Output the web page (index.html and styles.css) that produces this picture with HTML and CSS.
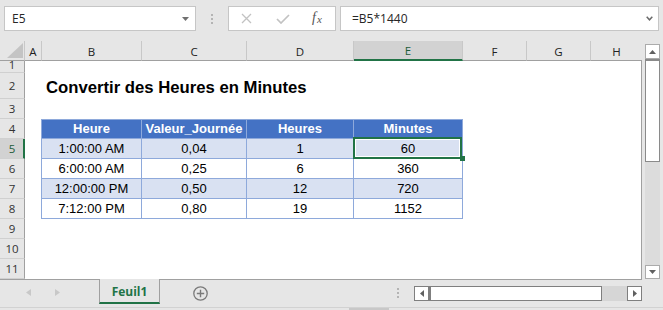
FILE: index.html
```html
<!DOCTYPE html>
<html lang="fr">
<head>
<meta charset="utf-8">
<title>Convertir des Heures en Minutes</title>
<link rel="stylesheet" href="styles.css">
</head>
<body>
<div class="app">
  <div class="topbar">
    <div class="namebox">
      <span>E5</span>
      <svg class="caret" width="7" height="4" viewBox="0 0 7 4"><path d="M0 0h7L3.5 4z" fill="#707070"/></svg>
    </div>
    <div class="grip"><i></i><i></i><i></i></div>
    <div class="fxbox">
      <svg class="ic-x" width="11" height="11" viewBox="0 0 11 11"><path d="M1 1l9 9M10 1l-9 9" stroke="#c2c2c2" stroke-width="1.3" fill="none"/></svg>
      <svg class="ic-check" width="14" height="10" viewBox="0 0 14 10"><path d="M1 5l4 4 8-8" stroke="#c2c2c2" stroke-width="1.7" fill="none"/></svg>
      <span class="fx"><i>f</i><i class="fx-x">x</i></span>
    </div>
    <div class="formula">
      <span>=B5*1440</span>
      <svg width="7" height="5" viewBox="0 0 7 5"><path d="M0.7 0.8L3.5 3.8 6.3 0.8" stroke="#6a6a6a" stroke-width="1.5" fill="none"/></svg>
    </div>
  </div>

  <div class="main">
    <div class="sheet">
      <div class="colhead">
        <div class="corner"><svg width="16" height="15" viewBox="0 0 16 15"><path d="M16 0V15H0z" fill="#c4c4c4"/></svg></div>
        <div class="ch w-a">A</div>
        <div class="ch w-b">B</div>
        <div class="ch w-c">C</div>
        <div class="ch w-d">D</div>
        <div class="ch w-e sel">E</div>
        <div class="ch w-f">F</div>
        <div class="ch w-g">G</div>
        <div class="ch w-h last">H</div>
      </div>

      <div class="row h12 r1"><div class="rh">1</div><div class="body"></div></div>
      <div class="row h26"><div class="rh">2</div><div class="body title-row"><span class="title">Convertir des Heures en Minutes</span></div></div>
      <div class="row h20"><div class="rh">3</div><div class="body"></div></div>

      <div class="row h20 thead">
        <div class="rh">4</div>
        <div class="body">
          <div class="sp"></div>
          <div class="tc b">Heure</div>
          <div class="tc c">Valeur_Journée</div>
          <div class="tc d">Heures</div>
          <div class="tc e">Minutes</div>
        </div>
      </div>
      <div class="row h20 band">
        <div class="rh sel">5</div>
        <div class="body">
          <div class="sp"></div>
          <div class="tc b">1:00:00 AM</div>
          <div class="tc c">0,04</div>
          <div class="tc d">1</div>
          <div class="tc e active">60</div>
        </div>
      </div>
      <div class="row h20">
        <div class="rh">6</div>
        <div class="body">
          <div class="sp"></div>
          <div class="tc b">6:00:00 AM</div>
          <div class="tc c">0,25</div>
          <div class="tc d">6</div>
          <div class="tc e">360</div>
        </div>
      </div>
      <div class="row h20 band">
        <div class="rh">7</div>
        <div class="body">
          <div class="sp"></div>
          <div class="tc b">12:00:00 PM</div>
          <div class="tc c">0,50</div>
          <div class="tc d">12</div>
          <div class="tc e">720</div>
        </div>
      </div>
      <div class="row h20">
        <div class="rh">8</div>
        <div class="body">
          <div class="sp"></div>
          <div class="tc b">7:12:00 PM</div>
          <div class="tc c">0,80</div>
          <div class="tc d">19</div>
          <div class="tc e">1152</div>
        </div>
      </div>
      <div class="row h20"><div class="rh">9</div><div class="body"></div></div>
      <div class="row h20"><div class="rh">10</div><div class="body"></div></div>
      <div class="row h20"><div class="rh">11</div><div class="body"></div></div>
    </div>

    <div class="vscroll">
      <div class="vbtn"><svg width="7" height="4" viewBox="0 0 7 4"><path d="M0 4h7L3.5 0z" fill="#606060"/></svg></div>
      <div class="vthumb"></div>
      <div class="vtrack"></div>
      <div class="vbtn down"><svg width="7" height="4" viewBox="0 0 7 4"><path d="M0 0h7L3.5 4z" fill="#606060"/></svg></div>
    </div>
  </div>

  <div class="tabbar">
    <div class="tabnav">
      <svg width="5" height="7" viewBox="0 0 5 7"><path d="M5 0v7L0 3.5z" fill="#c8c8c8"/></svg>
      <svg class="nav-next" width="5" height="7" viewBox="0 0 5 7"><path d="M0 0v7l5-3.5z" fill="#c8c8c8"/></svg>
    </div>
    <div class="tab">Feuil1</div>
    <div class="add">
      <svg width="15" height="15" viewBox="0 0 15 15"><circle cx="7.5" cy="7.5" r="6.7" fill="none" stroke="#7a7a7a" stroke-width="1.3"/><path d="M7.5 3.8v7.4M3.8 7.5h7.4" stroke="#7a7a7a" stroke-width="1.4"/></svg>
    </div>
    <div class="grip2"><i></i><i></i><i></i></div>
    <div class="hscroll">
      <div class="hbtn"><svg width="4" height="7" viewBox="0 0 4 7"><path d="M4 0v7L0 3.5z" fill="#606060"/></svg></div>
      <div class="hthumb"></div>
      <div class="htrack"></div>
      <div class="hbtn"><svg width="4" height="7" viewBox="0 0 4 7"><path d="M0 0v7l4-3.5z" fill="#606060"/></svg></div>
    </div>
  </div>
  <div class="statusbar"><div class="status-seg"></div></div>
</div>
</body>
</html>
```

FILE: styles.css
```css
* { box-sizing: border-box; }
html, body { margin: 0; padding: 0; }
body {
  width: 663px;
  height: 310px;
  overflow: hidden;
  background: #e6e6e6;
  font-family: "Open Sans", "Noto Sans", sans-serif;
  color: #262626;
}
.app {
  width: 663px;
  height: 310px;
  display: flex;
  flex-direction: column;
  background: #e6e6e6;
}

/* ---------- formula bar ---------- */
.topbar {
  height: 41px;
  flex: none;
  padding: 6px 4px 0 4px;
  display: flex;
  align-items: flex-start;
}
.namebox {
  width: 192px;
  height: 25px;
  background: #fff;
  border: 1px solid #c6c6c6;
  display: flex;
  align-items: center;
  justify-content: space-between;
  padding: 0 6px 0 7px;
  font-size: 12px;
  color: #262626;
}
.grip {
  width: 32px;
  display: flex;
  flex-direction: column;
  align-items: center;
  gap: 2px;
  padding-top: 8px;
}
.grip i, .grip2 i {
  display: block;
  width: 2px;
  height: 2px;
  background: #b4b4b4;
}
.fxbox {
  width: 108px;
  height: 25px;
  background: #fff;
  border: 1px solid #c6c6c6;
  display: flex;
  align-items: center;
  padding-left: 12px;
}
.ic-check { margin-left: 24px; }
.fx {
  margin-left: 22px;
  font-family: "Liberation Serif", "DejaVu Serif", serif;
  font-size: 14px;
  color: #555;
  line-height: 1;
  margin-top: -2px;
}
.fx i { font-style: italic; }
.fx-x { font-size: 11px; position: relative; top: 1px; margin-left: 1px; }
.formula {
  flex: 1;
  margin-left: 4px;
  height: 25px;
  background: #fff;
  border: 1px solid #c6c6c6;
  display: flex;
  align-items: center;
  justify-content: space-between;
  padding: 0 5px 0 11px;
  font-size: 12px;
  color: #262626;
}

/* ---------- grid ---------- */
.main {
  height: 238px;
  flex: none;
  display: flex;
}
.sheet {
  width: 642px;
  display: flex;
  flex-direction: column;
}
.colhead {
  height: 20px;
  display: flex;
  flex: none;
}
.corner {
  width: 25px;
  border-right: 1px solid #c8c8c8;
  border-bottom: 1px solid #a0a0a0;
  display: flex;
  align-items: flex-end;
  justify-content: flex-end;
  padding: 0 1px 2px 0;
}
.ch {
  border-right: 1px solid #c8c8c8;
  border-bottom: 1px solid #a0a0a0;
  display: flex;
  align-items: center;
  justify-content: center;
  font-size: 11.5px;
  color: #222;
  padding-top: 1px;
}
.ch.sel {
  background: #d2d2d2;
  border-bottom: 2px solid #217346;
  color: #1d5c39;
}
.ch.last { border-right: none; }
.w-a { width: 17px; }
.w-b { width: 100px; }
.w-c { width: 105px; }
.w-d { width: 107px; }
.w-e { width: 109px; }
.w-f { width: 64px; }
.w-g { width: 64px; }
.w-h { width: 51px; }

.row { display: flex; flex: none; }
.h12 { height: 12px; }
.h20 { height: 20px; }
.h26 { height: 26px; }
.rh {
  width: 25px;
  flex: none;
  border-right: 1px solid #a0a0a0;
  border-bottom: 1px solid #d0d0d0;
  display: flex;
  align-items: center;
  justify-content: center;
  font-size: 11.5px;
  color: #333;
  overflow: hidden;
  line-height: 18px;
}
.r1 .rh { align-items: flex-end; line-height: 15px; }
.rh.sel {
  background: #d2d2d2;
  border-right: 2px solid #217346;
  color: #1d5c39;
  padding-left: 1px;
}
.body {
  flex: 1;
  display: flex;
  background: #fff;
  border-right: 1px solid #a0a0a0;
}
.title-row {
  align-items: flex-end;
  padding: 0 0 2px 21px;
}
.title {
  font-family: "Liberation Sans", Arial, sans-serif;
  font-weight: bold;
  font-size: 16.7px;
  line-height: 19px;
  color: #000;
  white-space: nowrap;
}
.sp { width: 16px; flex: none; }
.tc {
  flex: none;
  border-right: 1px solid #8ea9db;
  border-bottom: 1px solid #8ea9db;
  text-align: center;
  font-family: "Liberation Sans", Arial, sans-serif;
  font-size: 13px;
  line-height: 18px;
  padding-top: 1px;
  color: #000;
  white-space: nowrap;
}
.tc.b { width: 101px; border-left: 1px solid #8ea9db; }
.tc.c { width: 105px; }
.tc.d { width: 107px; }
.tc.e { width: 109px; }
.thead .tc {
  background: #4472c4;
  color: #fff;
  font-weight: bold;
  border-top: 1px solid #8ea9db;
  padding-top: 0;
}
.band .tc { background: #d9e1f2; }
.tc.active { position: relative; }
.tc.active::after {
  content: "";
  position: absolute;
  left: -1px;
  top: -2px;
  right: 0;
  bottom: -1px;
  border: 2px solid #217346;
  box-shadow: inset 0 0 0 1px #fff;
}
.tc.active::before {
  content: "";
  position: absolute;
  width: 5px;
  height: 5px;
  right: -3px;
  bottom: -3px;
  background: #217346;
  z-index: 2;
}

/* ---------- vertical scrollbar ---------- */
.vscroll {
  width: 21px;
  display: flex;
  flex-direction: column;
  padding: 3px 3px 0 3px;
}
.vbtn {
  height: 15px;
  flex: none;
  background: #fff;
  border: 1px solid #ababab;
  display: flex;
  align-items: center;
  justify-content: center;
}
.vbtn.down { height: 14px; }
.vthumb {
  height: 103px;
  flex: none;
  background: #fff;
  border: 1px solid #8a8a8a;
  border-top-width: 2px;
}
.vtrack {
  flex: 1;
  background: #dcdcdc;
}

/* ---------- sheet tabs ---------- */
.tabbar {
  height: 28px;
  flex: none;
  display: flex;
  align-items: flex-start;
  background:
    linear-gradient(#a0a0a0, #a0a0a0) 0 0 / 99px 1px no-repeat,
    linear-gradient(#a0a0a0, #a0a0a0) 160px 0 / 482px 1px no-repeat,
    #e6e6e6;
}
.tabnav {
  width: 99px;
  height: 28px;
  display: flex;
  align-items: center;
  padding-left: 26px;
  padding-bottom: 1px;
}
.nav-next { margin-left: 24px; }
.tab {
  width: 61px;
  height: 25px;
  border-left: 1px solid #a0a0a0;
  border-right: 1px solid #a0a0a0;
  border-bottom: 2px solid #217346;
  display: flex;
  align-items: center;
  justify-content: center;
  padding-top: 2px;
  font-weight: bold;
  font-size: 12px;
  color: #217346;
}
.add {
  margin-left: 33px;
  margin-top: 7px;
  width: 15px;
  height: 15px;
}
.add svg { display: block; }
.grip2 {
  margin-left: 189px;
  margin-top: 9px;
  display: flex;
  flex-direction: column;
  gap: 2px;
}
.hscroll {
  margin-left: 15px;
  margin-top: 7px;
  width: 228px;
  height: 15px;
  display: flex;
}
.hbtn {
  width: 15px;
  flex: none;
  background: #fff;
  border: 1px solid #7f7f7f;
  display: flex;
  align-items: center;
  justify-content: center;
}
.hthumb {
  width: 173px;
  flex: none;
  background: #fff;
  border: 1px solid #7f7f7f;
  border-left-width: 2px;
}
.htrack {
  flex: 1;
  background: #d6d6d6;
}
.statusbar {
  height: 3px;
  flex: none;
  border-top: 1px solid #d2d2d2;
  padding-left: 349px;
}
.status-seg {
  width: 40px;
  height: 2px;
  background: #c8c8c8;
}
```
